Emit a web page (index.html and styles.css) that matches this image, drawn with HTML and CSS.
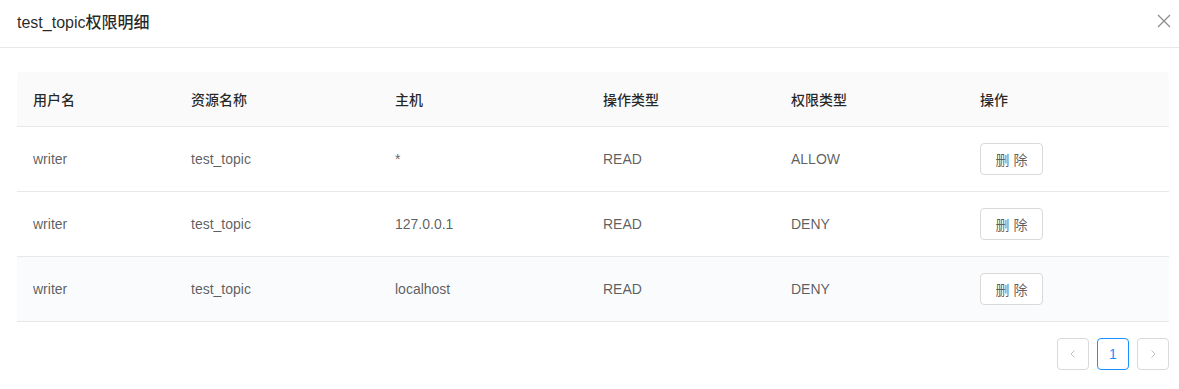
FILE: index.html
```html
<!DOCTYPE html>
<html lang="zh-CN">
<head>
    <meta charset="UTF-8">
    <title>test_topic权限明细</title>
    <link rel="stylesheet" href="styles.css">
</head>
<body>
    <div class="modal">
        <div class="modal-header">
            <div class="modal-title">test_topic权限明细</div>
            <span class="modal-close">
                <svg width="14" height="14" viewBox="0 0 14 14"><path d="M1 1 L13 13 M13 1 L1 13" stroke="currentColor" stroke-width="1.3" fill="none"/></svg>
            </span>
        </div>
        <div class="modal-body">
            <table class="acl-table">
                <colgroup>
                    <col style="width: 158px">
                    <col style="width: 204px">
                    <col style="width: 208px">
                    <col style="width: 188px">
                    <col style="width: 189px">
                    <col>
                </colgroup>
                <thead>
                    <tr>
                        <th>用户名</th>
                        <th>资源名称</th>
                        <th>主机</th>
                        <th>操作类型</th>
                        <th>权限类型</th>
                        <th>操作</th>
                    </tr>
                </thead>
                <tbody>
                    <tr>
                        <td>writer</td>
                        <td>test_topic</td>
                        <td>*</td>
                        <td>READ</td>
                        <td>ALLOW</td>
                        <td><button class="btn">删 除</button></td>
                    </tr>
                    <tr>
                        <td>writer</td>
                        <td>test_topic</td>
                        <td>127.0.0.1</td>
                        <td>READ</td>
                        <td>DENY</td>
                        <td><button class="btn">删 除</button></td>
                    </tr>
                    <tr class="hover">
                        <td>writer</td>
                        <td>test_topic</td>
                        <td>localhost</td>
                        <td>READ</td>
                        <td>DENY</td>
                        <td><button class="btn">删 除</button></td>
                    </tr>
                </tbody>
            </table>
            <ul class="pagination">
                <li class="page-item disabled">
                    <svg width="10" height="10" viewBox="0 0 10 10"><path d="M6.5 1.5 L3 5 L6.5 8.5" stroke="currentColor" stroke-width="1" fill="none"/></svg>
                </li>
                <li class="page-item active">1</li>
                <li class="page-item disabled">
                    <svg width="10" height="10" viewBox="0 0 10 10"><path d="M3.5 1.5 L7 5 L3.5 8.5" stroke="currentColor" stroke-width="1" fill="none"/></svg>
                </li>
            </ul>
        </div>
    </div>
</body>
</html>
```

FILE: styles.css
```css
body {
    margin: 0;
    background: #fff;
    font-family: "Liberation Sans", Arial, "Noto Sans CJK SC", sans-serif;
    font-size: 14px;
    color: rgba(0, 0, 0, 0.65);
}
.modal {
    width: 1179px;
    height: 389px;
    overflow: hidden;
}
.modal-header {
    height: 48px;
    box-sizing: border-box;
    border-bottom: 1px solid #e8e8e8;
    display: flex;
    align-items: center;
    justify-content: space-between;
    padding: 0 8px 0 17px;
}
.modal-title {
    font-size: 16px;
    font-weight: 500;
    color: rgba(0, 0, 0, 0.85);
    margin-top: -5px;
}
.modal-close {
    color: rgba(0, 0, 0, 0.45);
    display: flex;
    margin-top: -5px;
}
.modal-body {
    padding: 24px 10px 0 17px;
}
.acl-table {
    width: 1152px;
    border-collapse: separate;
    border-spacing: 0;
    table-layout: fixed;
}
.acl-table th {
    background: #fafafa;
    color: rgba(0, 0, 0, 0.85);
    font-weight: 500;
    text-align: left;
    height: 54px;
    padding: 0 16px;
    border-bottom: 1px solid #e8e8e8;
}
.acl-table th:first-child {
    border-top-left-radius: 4px;
}
.acl-table th:last-child {
    border-top-right-radius: 4px;
}
.acl-table td {
    height: 64px;
    padding: 0 16px;
    border-bottom: 1px solid #e8e8e8;
    vertical-align: middle;
}
.acl-table tr.hover td {
    background: #f9fbfd;
}
.btn {
    height: 32px;
    width: 63px;
    padding: 0;
    background: #fff;
    border: 1px solid #d9d9d9;
    border-radius: 4px;
    font-family: inherit;
    font-size: 14px;
    color: rgba(0, 0, 0, 0.65);
    cursor: pointer;
}
.pagination {
    list-style: none;
    margin: 16px 0 0;
    padding: 0;
    display: flex;
    justify-content: flex-end;
    gap: 8px;
    width: 1152px;
}
.page-item {
    width: 32px;
    height: 32px;
    box-sizing: border-box;
    border: 1px solid #d9d9d9;
    border-radius: 4px;
    display: flex;
    align-items: center;
    justify-content: center;
    color: rgba(0, 0, 0, 0.65);
}
.page-item.disabled {
    color: rgba(0, 0, 0, 0.25);
}
.page-item.active {
    border-color: #1890ff;
    color: #1890ff;
    font-weight: 500;
}
```
